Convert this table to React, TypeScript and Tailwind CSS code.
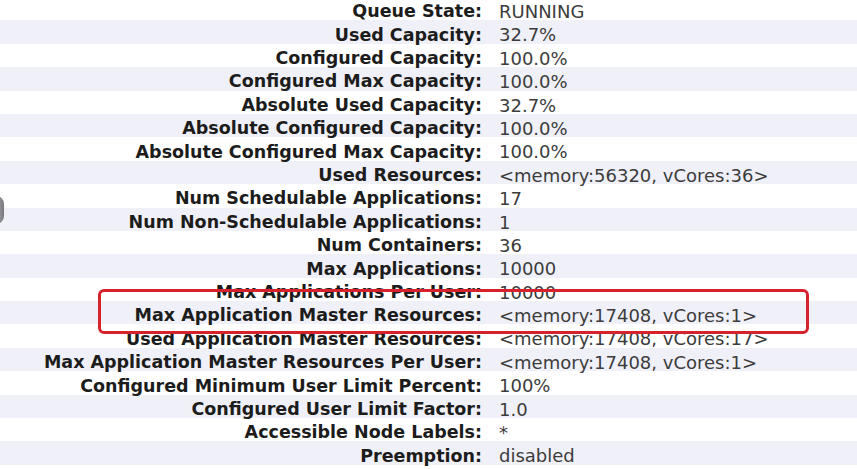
const rows: [string, string][] = [
  ['Queue State:', 'RUNNING'],
  ['Used Capacity:', '32.7%'],
  ['Configured Capacity:', '100.0%'],
  ['Configured Max Capacity:', '100.0%'],
  ['Absolute Used Capacity:', '32.7%'],
  ['Absolute Configured Capacity:', '100.0%'],
  ['Absolute Configured Max Capacity:', '100.0%'],
  ['Used Resources:', '<memory:56320, vCores:36>'],
  ['Num Schedulable Applications:', '17'],
  ['Num Non-Schedulable Applications:', '1'],
  ['Num Containers:', '36'],
  ['Max Applications:', '10000'],
  ['Max Applications Per User:', '10000'],
  ['Max Application Master Resources:', '<memory:17408, vCores:1>'],
  ['Used Application Master Resources:', '<memory:17408, vCores:17>'],
  ['Max Application Master Resources Per User:', '<memory:17408, vCores:1>'],
  ['Configured Minimum User Limit Percent:', '100%'],
  ['Configured User Limit Factor:', '1.0'],
  ['Accessible Node Labels:', '*'],
  ['Preemption:', 'disabled'],
]

const App = () => {
  return (
    <div className="relative w-[857px] h-[469px] overflow-hidden bg-white" style={{ fontFamily: 'Verdana, "DejaVu Sans", sans-serif' }}>
      <div className="-mt-[3px]">
        {rows.map(([label, value], i) => (
          <div
            key={label}
            className={`grid grid-cols-[482px_1fr] items-center h-[23.4px] pt-[6px] leading-none ${i % 2 === 1 ? 'bg-[#f0f0f8]' : 'bg-white'}`}
          >
            <div className="text-right text-[17.5px] font-bold text-[#1c1c1c] whitespace-nowrap">{label}</div>
            <div className="pl-[17px] text-[18px] text-[#3c3c3c] whitespace-nowrap">{value}</div>
          </div>
        ))}
      </div>

      {/* red annotation box */}
      <div className="absolute left-[98px] top-[289px] w-[711px] h-[45px] border-[3px] border-[#d5222c] rounded-[6px]" />

      {/* partial circle on the left edge */}
      <div className="absolute -left-[12px] top-[196px] w-[16px] h-[28px] rounded-full bg-gradient-to-r from-[#d8d8dc] to-[#77777d]" />
    </div>
  )
}

export default App
